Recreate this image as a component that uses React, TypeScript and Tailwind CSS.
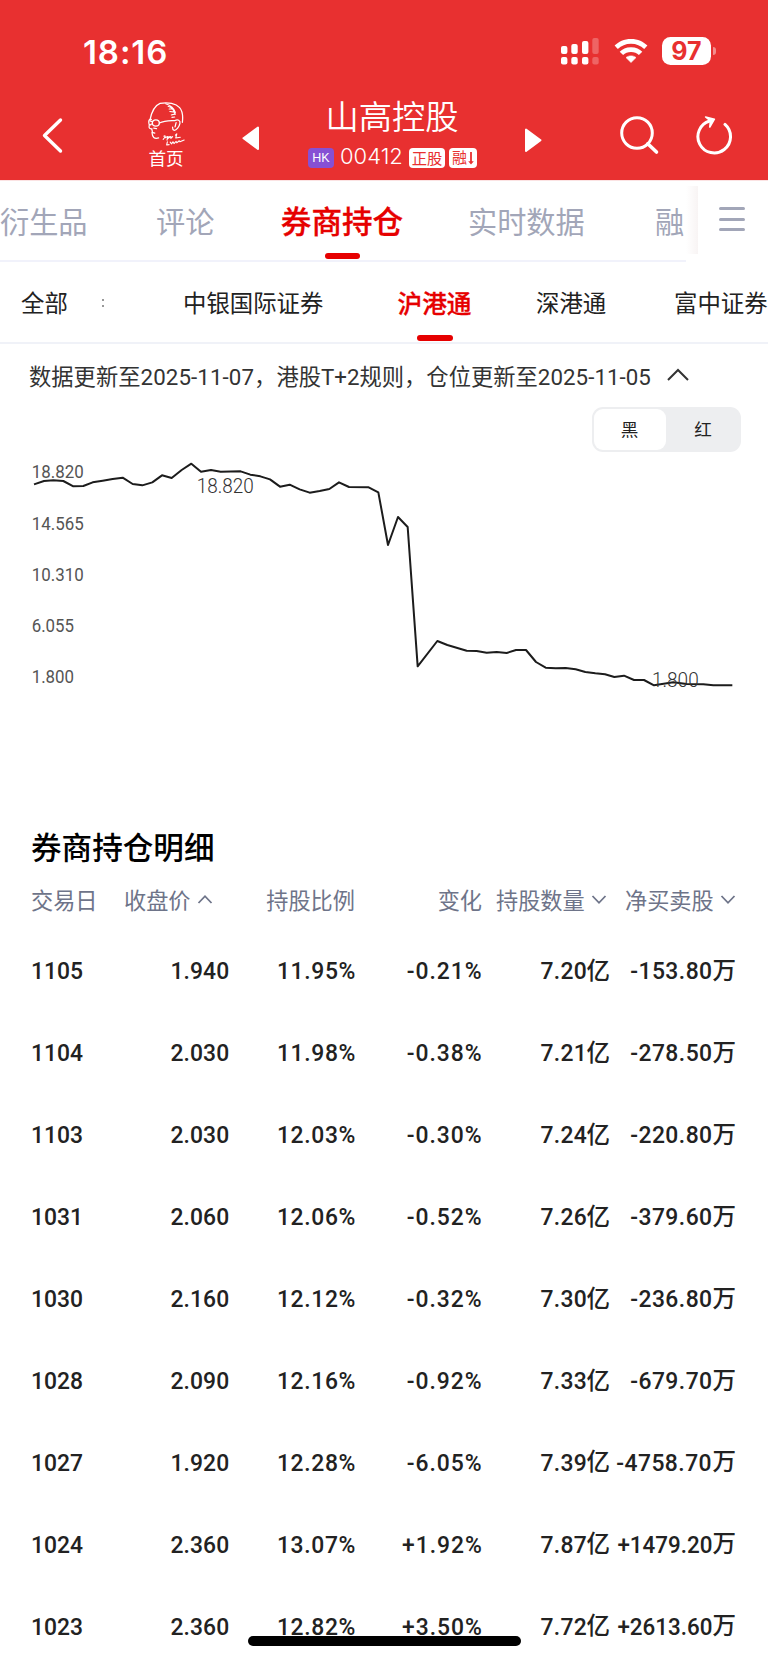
import React from "react";

const rows = [
  ["1105", "1.940", "11.95%", "-0.21%", "7.20", "-153.80"],
  ["1104", "2.030", "11.98%", "-0.38%", "7.21", "-278.50"],
  ["1103", "2.030", "12.03%", "-0.30%", "7.24", "-220.80"],
  ["1031", "2.060", "12.06%", "-0.52%", "7.26", "-379.60"],
  ["1030", "2.160", "12.12%", "-0.32%", "7.30", "-236.80"],
  ["1028", "2.090", "12.16%", "-0.92%", "7.33", "-679.70"],
  ["1027", "1.920", "12.28%", "-6.05%", "7.39", "-4758.70"],
  ["1024", "2.360", "13.07%", "+1.92%", "7.87", "+1479.20"],
  ["1023", "2.360", "12.82%", "+3.50%", "7.72", "+2613.60"],
];

const line =
  "102,283 132,273 160,271 190,273 220,289 250,288 278,277 308,272 338,267 368,263 398,282 427,286 457,277 486,256 515,264 545,240 574,221 603,245 633,240 662,245 722,244 751,254 781,259 810,268 840,290 869,284 899,298 929,308 959,303 988,297 1017,277 1047,291 1106,292 1135,307 1164,465 1194,381 1223,411 1253,829 1312,753 1342,765 1400,782 1430,783 1460,788 1490,786 1520,789 1548,780 1578,780 1608,816 1637,833 1667,835 1697,834 1727,838 1756,846 1786,850 1815,853 1843,861 1872,857 1902,870 1932,870 1962,886 2020,877 2060,882 2110,883 2140,886 2197,886";

const axis = [
  { label: "18.820", y: 265 },
  { label: "14.565", y: 419 },
  { label: "10.310", y: 573 },
  { label: "6.055", y: 726 },
  { label: "1.800", y: 880 },
];

function StatusBar() {
  return (
    <div className="flex h-[92px] items-start">
      <div className="ml-[83px] mt-[32px] w-[120px] font-['Inter'] text-[33px] font-semibold leading-10 tracking-[0.9px]">18:16</div>
      <svg className="ml-[357px] mt-[37px]" width="40" height="29" viewBox="0 0 40 29" fill="#fff">
        <rect x="1" y="9" width="6.4" height="8" rx="2" />
        <rect x="11.3" y="7" width="6.4" height="10" rx="2" />
        <rect x="22" y="4" width="6.4" height="13" rx="2" />
        <rect x="32.3" y="1" width="6.4" height="16" rx="2" opacity=".25" />
        <rect x="1" y="20" width="6.4" height="7.6" rx="2" />
        <rect x="11.3" y="20" width="6.4" height="7.6" rx="2" />
        <rect x="22" y="20" width="6.4" height="7.6" rx="2" />
        <rect x="32.3" y="20" width="6.4" height="7.6" rx="2" opacity=".25" />
      </svg>
      <svg className="ml-[14px] mt-[38px]" width="34" height="26" viewBox="0 0 34 26" fill="#fff">
        <path d="M17 24.5 L12 19.6 C14.6 17.3 19.4 17.3 22 19.6 Z" stroke="#fff" strokeWidth=".6" strokeLinejoin="round" />
        <path d="M17 9.2 C22.1 9.2 25.6 11.2 28.3 13.7 L24.9 17.1 C22.9 15.2 20.2 14 17 14 C13.8 14 11.1 15.2 9.1 17.1 L5.7 13.7 C8.4 11.2 11.9 9.2 17 9.2Z" />
        <path d="M17 1 C24 1 29.4 3.7 33.4 7.6 L30.2 11 C26.6 7.7 22.4 5.7 17 5.7 C11.6 5.7 7.4 7.7 3.8 11 L.6 7.6 C4.6 3.7 10 1 17 1Z" />
      </svg>
      <div className="ml-[14px] mt-[37px] flex h-[28px] w-[49px] items-center justify-center rounded-[8.5px] bg-white font-['Inter'] text-[25px] font-bold leading-7 text-[#e83030]">97</div>
      <div className="ml-[2px] mt-[47px] h-[8px] w-[3px] rounded-r-full bg-white/45" />
    </div>
  );
}

function Portrait() {
  return (
    <svg width="37" height="44" viewBox="0 0 105 126" fill="none" stroke="#fff" strokeWidth="3.6" strokeLinecap="round" strokeLinejoin="round">
      <path d="M5 52 C9 32 19 10 34 4 C57 -1 80 5 90 16 C98 25 100 41 98 58" />
      <path d="M50 5 C64 9 74 17 78 30 M57 12 C65 14 74 22 77 36 M60 20 L72 20 M62 27 L76 29 M66 37 L78 34 M68 44 L76 43" strokeWidth="3" />
      <path d="M9 50 C3 48 1 53 2 60 C2 66 7 68 9 63" />
      <ellipse cx="22" cy="60" rx="10" ry="9" />
      <path d="M11 56 L5 54 M32 60 C48 53 63 54 77 53 C84 49 93 52 91 61 C89 70 81 82 74 81 C69 79 70 74 70 72 M80 59 L77 71" />
      <path d="M3 67 C1 77 6 76 11 77 M10 77 C11 84 14 83 11 87 L19 89 M11 88 C12 101 17 106 30 103" />
      <path d="M16 75 L24 76" />
      <path d="M45 98 C49 94 51 99 43 107 M49 102 L56 99 L54 109 M60 99 L57 104 L65 99 L65 104 L70 99 M78 95 L82 91 L79 103 L92 101 M55 114 L53 123 L60 122 M63 115 L67 120 L71 114 L74 119 L80 113 L82 117 L89 111 L91 114 L103 109" strokeWidth="3.2" />
    </svg>
  );
}

function NavBar() {
  return (
    <div className="flex h-[88px] items-start">
      <svg className="ml-[41px] mt-[24px]" width="24" height="38" viewBox="0 0 24 38" fill="none" stroke="#fff" strokeWidth="3.4" strokeLinecap="round" strokeLinejoin="round">
        <path d="M19.5 4 L3.5 19.5 L19.5 35" />
      </svg>
      <div className="ml-[81px] mt-[10px] flex w-[40px] flex-col items-center">
        <Portrait />
        <span className="whitespace-nowrap text-[17.6px] leading-6">首页</span>
      </div>
      <svg className="ml-[55px] mt-[33px]" width="20" height="26" viewBox="0 0 20 26" fill="#fff" stroke="#fff" strokeWidth="2" strokeLinejoin="round">
        <path d="M17 2.5 L17 24 L2.5 13.2 Z" />
      </svg>
      <div className="ml-[43px] flex w-[178px] flex-col items-center">
        <div className="mr-[2px] mt-[3px] text-[33.3px] font-[350] leading-10">山高控股</div>
        <div className="mt-[3px] flex h-[36px] w-[170px] items-start">
          <span className="mt-[10px] flex h-[20px] w-[26px] shrink-0 items-center justify-center rounded-[4px] bg-[#8650d4] font-['Liberation_Sans'] text-[12.5px] leading-5">HK</span>
          <span className="ml-[6px] mt-[5px] w-[64px] shrink-0 font-['Inter'] text-[22px] font-light leading-[27px]">00412</span>
          <span className="ml-[5px] mt-[10px] flex h-[20px] w-[36px] shrink-0 items-center justify-center rounded-[4px] bg-white text-[15.3px] leading-[18px] text-[#e83030]"><span className="-mt-[2px]">正股</span></span>
          <span className="ml-[4px] mt-[10px] flex h-[20px] w-[28px] shrink-0 items-center justify-center rounded-[4px] bg-white text-[15px] leading-[18px] text-[#e83030]">
            <span className="-mt-[2px]">融</span>
            <svg className="ml-[1px]" width="6" height="14" viewBox="0 0 6 14" fill="#e83030">
              <path d="M2.1 1H3.9V10.2H5.8L3 13.6L.2 10.2H2.1Z" />
            </svg>
          </span>
        </div>
      </div>
      <svg className="ml-[41px] mt-[35px]" width="20" height="27" viewBox="0 0 20 27" fill="#fff" stroke="#fff" strokeWidth="2" strokeLinejoin="round">
        <path d="M3 2.5 L3 24 L17.5 13.2 Z" />
      </svg>
      <svg className="ml-[76px] mt-[23px]" width="42" height="42" viewBox="0 0 42 42" fill="none" stroke="#fff" strokeWidth="3" strokeLinecap="round">
        <circle cx="18" cy="18" r="15.3" />
        <path d="M28.8 28.8 L37.5 37" strokeWidth="3.6" />
      </svg>
      <svg className="ml-[34px] mt-[22px]" width="40" height="42" viewBox="0 0 40 42" fill="none" stroke="#fff" strokeWidth="3.2" strokeLinecap="round">
        <path d="M30 10.4 A16.3 16.3 0 1 1 14.6 7" strokeWidth="3" />
        <path d="M10.6 3 L19.4 5.2 L14.8 13 L15.4 7 Z" strokeWidth="1.6" fill="#fff" strokeLinejoin="round" />
      </svg>
    </div>
  );
}

function Chevron({ up = false, wide = false }: { up?: boolean; wide?: boolean }) {
  return (
    <svg width={wide ? 22 : 16} height={wide ? 14 : 11} viewBox={wide ? "0 0 22 14" : "0 0 16 11"} fill="none" stroke="currentColor" strokeWidth={wide ? 2 : 1.8}>
      <path d={wide ? "M1 12 L11 2 L21 12" : up ? "M1.5 9 L8 2.2 L14.5 9" : "M1.5 2 L8 8.8 L14.5 2"} />
    </svg>
  );
}

function Tabs() {
  return (
    <div className="flex h-[82px] border-t border-[#fbe3e3]">
      <div className="flex h-[81px] w-[686px] items-start whitespace-nowrap border-b-2 border-[#f1f2fb] pt-[17px] text-[29.2px] leading-[44px] text-[#a2a6b8]">
        <span className="w-[88px] shrink-0">衍生品</span>
        <span className="ml-[68px] w-[59px] shrink-0">评论</span>
        <span className="ml-[65px] flex w-[124px] shrink-0 flex-col items-center text-[30.6px] font-medium text-[#e60000] [-webkit-text-stroke:0.3px_#e60000]">
          <span>券商持仓</span>
          <i className="mt-[11px] h-[6px] w-[35px] rounded-full bg-[#e60000]" />
        </span>
        <span className="ml-[64px] w-[118px] shrink-0">实时数据</span>
        <span className="ml-[69px] w-[30px] shrink-0">融</span>
      </div>
      <div className="mt-[5px] h-[68px] w-[12px] bg-gradient-to-r from-white to-[#f8f4f4]" />
      <div className="ml-[21px] mt-[26px] flex h-[24px] w-[26px] flex-col justify-between">
        <i className="h-[3px] rounded-full bg-[#a2a6b8]" />
        <i className="h-[3px] rounded-full bg-[#a2a6b8]" />
        <i className="h-[3px] rounded-full bg-[#a2a6b8]" />
      </div>
    </div>
  );
}

function Brokers() {
  return (
    <div className="flex h-[82px] items-start overflow-hidden whitespace-nowrap border-b-2 border-[#f0f2f8] pt-[22px] text-[23.4px] leading-9 text-[#222]">
      <span className="ml-[21px] w-[48px] shrink-0">全部</span>
      <span className="ml-[33px] mt-[15px] flex w-[2px] shrink-0 flex-col gap-[4px]">
        <i className="h-[2px] w-[2px] bg-[#999]" />
        <i className="h-[2px] w-[2px] bg-[#999]" />
      </span>
      <span className="ml-[79px] w-[142px] shrink-0">中银国际证券</span>
      <span className="ml-[72px] flex w-[76px] shrink-0 flex-col items-center text-[24.7px] font-medium text-[#e60000] [-webkit-text-stroke:0.3px_#e60000]">
        <span className="mr-px">沪港通</span>
        <i className="mt-[15px] h-[6px] w-[36px] rounded-full bg-[#e60000]" />
      </span>
      <span className="ml-[63px] w-[71px] shrink-0">深港通</span>
      <span className="ml-[67px] w-[94px] shrink-0">富中证券</span>
    </div>
  );
}

export default function App() {
  return (
    <div className="relative h-[1663px] w-[768px] overflow-hidden bg-white font-['Noto_Sans_CJK_SC',sans-serif]">
      <header className="h-[180px] bg-[#e83030] text-white">
        <StatusBar />
        <NavBar />
      </header>
      <Tabs />
      <Brokers />
      <div className="flex h-[63px] items-center pb-[1px] pl-[29px] text-[22.3px] text-[#333]">
        <p className="w-[624px] whitespace-nowrap pt-[5px] font-['Roboto','Noto_Sans_CJK_SC',sans-serif]">
          数据更新至<span className="tracking-[0.1px]">2025-11-07</span>，港股T+2规则，仓位更新至<span className="tracking-[0.05px]">2025-11-05</span>
        </p>
        <span className="mb-[1px] ml-[14px]"><Chevron up wide /></span>
      </div>
      <div className="ml-[592px] flex h-[45px] w-[149px] items-stretch rounded-[11px] bg-[#edeef0] p-[2px] text-[17.6px] text-[#222]">
        <span className="flex w-[72px] items-center justify-center rounded-[9px] bg-white pr-px">黑</span>
        <span className="ml-px flex w-[72px] items-center justify-center">红</span>
      </div>
      <svg width="768" height="368" viewBox="0 186 2304 1104" className="block font-['Roboto']">
        <g fill="#555" fontSize="56">
          {axis.map((a) => (
            <text key={a.label} x="95" y={a.y} textLength={a.label.length === 6 ? 156 : 127} lengthAdjust="spacingAndGlyphs">{a.label}</text>
          ))}
        </g>
        <polyline points={line} fill="none" stroke="#1c1c1c" strokeWidth="6" strokeLinejoin="round" />
        <g fill="#333" fontSize="58" fontWeight="300">
          <text x="590" y="308" textLength="171" lengthAdjust="spacingAndGlyphs">18.820</text>
          <text x="1956" y="890" textLength="140" lengthAdjust="spacingAndGlyphs">1.800</text>
        </g>
      </svg>
      <h2 className="ml-[31px] h-[52px] pt-[3px] text-[30.6px] font-medium leading-[46px] text-black">券商持仓明细</h2>
      <div className="flex h-[58px] items-start whitespace-nowrap pl-[31px] text-[22.2px] leading-[54px] text-[#6e7489]">
        <span className="w-[93px]">交易日</span>
        <span className="flex w-[106px] items-center gap-[6px]">收盘价<Chevron up /></span>
        <span className="w-[125px] text-right">持股比例</span>
        <span className="w-[127px] text-right">变化</span>
        <span className="ml-[14px] flex w-[129px] items-center gap-[6px]">持股数量<Chevron /></span>
        <span className="flex items-center gap-[6px]">净买卖股<Chevron /></span>
      </div>
      <div className="text-[#222]">
        {rows.map((r) => (
          <div key={r[0]} className="flex h-[81.94px] items-center whitespace-nowrap pl-[31px] pt-px font-['Roboto','Noto_Sans_CJK_SC',sans-serif] text-[24.6px] font-medium">
            <span className="w-[93px]"><span className="inline-block origin-left scale-x-[0.93]">{r[0]}</span></span>
            <span className="flex w-[105px] justify-end"><span className="origin-right scale-x-[0.93] tracking-[0.1px]">{r[1]}</span></span>
            <span className="flex w-[127px] justify-end"><span className="origin-right scale-x-[0.93] tracking-[0.7px]">{r[2]}</span></span>
            <span className="flex w-[127px] justify-end"><span className="origin-right scale-x-[0.93] tracking-[1.05px]">{r[3]}</span></span>
            <span className="flex w-[127px] items-center justify-end"><span className="origin-right scale-x-[0.93] tracking-[0.3px]">{r[4]}</span><span className="text-[23.5px]">亿</span></span>
            <span className="flex w-[126px] items-center justify-end"><span className={r[5][0] === "+" ? "origin-right scale-x-[0.91]" : "origin-right scale-x-[0.93] tracking-[0.5px]"}>{r[5]}</span><span className="text-[23.5px]">万</span></span>
          </div>
        ))}
      </div>
      <div className="absolute bottom-[17px] left-[248px] h-[10px] w-[273px] rounded-full bg-black" />
    </div>
  );
}
